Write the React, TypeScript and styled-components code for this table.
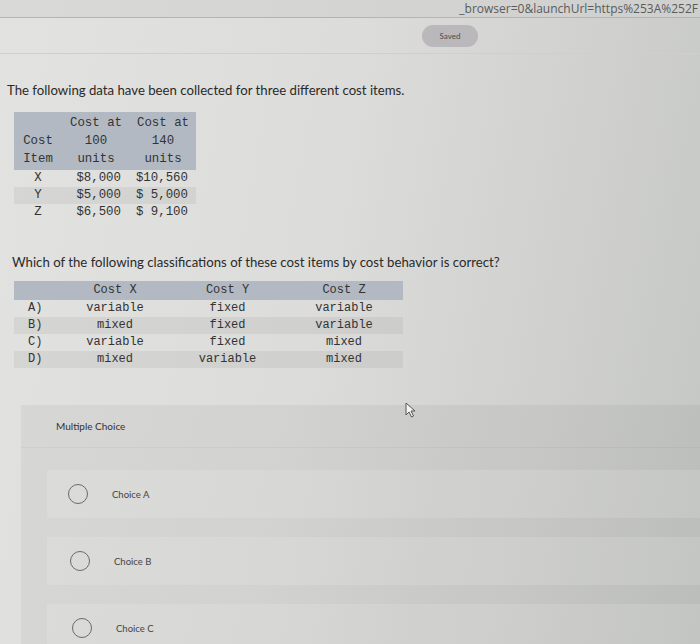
import React from "react";
import styled, { createGlobalStyle } from "styled-components";

const Global = createGlobalStyle`
  html, body { margin: 0; padding: 0; }
  body {
    width: 700px;
    height: 644px;
    overflow: hidden;
    background: linear-gradient(100deg, #e2e2e0 0%, #dcdcda 45%, #d0d1ce 75%, #c4c6c3 100%);
    font-family: Lato, "Open Sans", sans-serif;
    color: #2b2b2b;
  }
`;

const Page = styled.div`
  position: relative;
  width: 700px;
  height: 644px;
  overflow: hidden;
  display: flex;
  flex-direction: column;
`;

const UrlBar = styled.div`
  flex: none;
  height: 17px;
  border-bottom: 1px solid #b4b5b3;
  display: flex;
  justify-content: flex-end;
  align-items: center;
  overflow: hidden;
  background: linear-gradient(90deg, #d9d9d7, #cfd0ce);
`;

const UrlText = styled.span`
  font-family: "Open Sans", sans-serif;
  font-size: 12px;
  line-height: 15px;
  color: #5a5b5a;
  white-space: nowrap;
  margin-right: 2px;
`;

const StatusRow = styled.div`
  flex: none;
  height: 35px;
  display: flex;
  align-items: center;
  padding-left: 422px;
  border-bottom: 1px solid #cfd0ce;
`;

const SavedPill = styled.div`
  width: 56px;
  height: 22px;
  border-radius: 11px;
  background: #bab8bb;
  color: #4a4a4a;
  font-size: 8px;
  display: flex;
  align-items: center;
  justify-content: center;
`;

const Content = styled.div`
  flex: none;
  padding: 28px 0 0 7px;
  display: flex;
  flex-direction: column;
  align-items: flex-start;
`;

const Prompt = styled.p<{ $top?: number; $left?: number }>`
  margin: ${(p) => p.$top ?? 0}px 0 0 ${(p) => p.$left ?? 0}px;
  font-size: 13.2px;
  line-height: 16px;
  color: #2a2a2a;
  white-space: nowrap;
`;

const DataTable = styled.table<{ $top: number }>`
  margin: ${(p) => p.$top}px 0 0 7px;
  border-collapse: collapse;
  table-layout: fixed;
  font-family: "Liberation Mono", "DejaVu Sans Mono", monospace;
  font-size: 12.4px;
  color: #333;
`;

const HeadRow = styled.tr`
  background: #b2b9c2;
`;

const HeadCell = styled.th`
  font-weight: normal;
  text-align: center;
  vertical-align: bottom;
  line-height: 18px;
  padding: 2px 0 2px;
`;

const BodyRow = styled.tr<{ $shade?: boolean }>`
  background: ${(p) => (p.$shade ? "rgba(0,0,0,0.05)" : "transparent")};
`;

const Cell = styled.td<{ $align?: string; $pad?: number }>`
  text-align: ${(p) => p.$align ?? "center"};
  padding: 0 ${(p) => (p.$align === "right" ? p.$pad ?? 0 : 0)}px 0
    ${(p) => (p.$align === "left" ? p.$pad ?? 0 : 0)}px;
  line-height: 17px;
  white-space: pre;
`;

const ChoiceTable = styled(DataTable)`
  font-size: 12px;
`;

const ChoiceHead = styled.th`
  font-weight: normal;
  line-height: 19px;
  padding: 0;
`;

const Panel = styled.div`
  margin: 37px 0 0 21px;
  flex: 1;
  min-height: 0;
  overflow: hidden;
  background: rgba(0, 0, 0, 0.045);
  display: flex;
  flex-direction: column;
`;

const PanelHeader = styled.div`
  flex: none;
  height: 42px;
  padding-left: 35px;
  display: flex;
  align-items: center;
  font-size: 10px;
  color: #333;
  border-bottom: 1px solid rgba(0, 0, 0, 0.03);
`;

const ChoiceList = styled.div`
  flex: none;
  padding: 22px 0 0 26px;
  display: flex;
  flex-direction: column;
  gap: 19px;
`;

const ChoiceRow = styled.div<{ $shift: number }>`
  flex: none;
  height: 48px;
  background: rgba(255, 255, 255, 0.13);
  display: flex;
  align-items: center;
  padding-left: ${(p) => 21 + p.$shift}px;
`;

const Radio = styled.span`
  width: 18px;
  height: 18px;
  border-radius: 50%;
  border: 1.5px solid #6a6a6a;
  flex: none;
`;

const ChoiceLabel = styled.span`
  margin-left: 24px;
  font-size: 9.5px;
  color: #444;
`;

const Cursor = styled.svg`
  position: absolute;
  left: 405px;
  top: 402px;
`;

const costRows = [
  { item: "X", a: "$8,000", b: "$10,560", shade: false },
  { item: "Y", a: "$5,000", b: "$ 5,000", shade: true },
  { item: "Z", a: "$6,500", b: "$ 9,100", shade: false },
];

const options = [
  { l: "A)", x: "variable", y: "fixed", z: "variable" },
  { l: "B)", x: "mixed", y: "fixed", z: "variable" },
  { l: "C)", x: "variable", y: "fixed", z: "mixed" },
  { l: "D)", x: "mixed", y: "variable", z: "mixed" },
];

export default function App() {
  return (
    <>
      <Global />
      <Page>
        <UrlBar>
          <UrlText>_browser=0&amp;launchUrl=https%253A%252F</UrlText>
        </UrlBar>
        <StatusRow>
          <SavedPill>Saved</SavedPill>
        </StatusRow>
        <Content>
          <Prompt>The following data have been collected for three different cost items.</Prompt>
          <DataTable $top={14}>
            <colgroup>
              <col style={{ width: 48 }} />
              <col style={{ width: 68 }} />
              <col style={{ width: 66 }} />
            </colgroup>
            <thead>
              <HeadRow>
                <HeadCell>
                  Cost
                  <br />
                  Item
                </HeadCell>
                <HeadCell>
                  Cost at
                  <br />
                  100
                  <br />
                  units
                </HeadCell>
                <HeadCell>
                  Cost at
                  <br />
                  140
                  <br />
                  units
                </HeadCell>
              </HeadRow>
            </thead>
            <tbody>
              {costRows.map((r) => (
                <BodyRow key={r.item} $shade={r.shade}>
                  <Cell>{r.item}</Cell>
                  <Cell $align="right" $pad={9}>{r.a}</Cell>
                  <Cell $align="right" $pad={8}>{r.b}</Cell>
                </BodyRow>
              ))}
            </tbody>
          </DataTable>
          <Prompt $top={33} $left={5}>
            Which of the following classifications of these cost items by cost behavior is correct?
          </Prompt>
          <ChoiceTable $top={11}>
            <colgroup>
              <col style={{ width: 46 }} />
              <col style={{ width: 110 }} />
              <col style={{ width: 115 }} />
              <col style={{ width: 118 }} />
            </colgroup>
            <thead>
              <HeadRow>
                <ChoiceHead></ChoiceHead>
                <ChoiceHead>Cost X</ChoiceHead>
                <ChoiceHead>Cost Y</ChoiceHead>
                <ChoiceHead>Cost Z</ChoiceHead>
              </HeadRow>
            </thead>
            <tbody>
              {options.map((o, i) => (
                <BodyRow key={o.l} $shade={i % 2 === 1}>
                  <Cell $align="left" $pad={14}>{o.l}</Cell>
                  <Cell>{o.x}</Cell>
                  <Cell>{o.y}</Cell>
                  <Cell>{o.z}</Cell>
                </BodyRow>
              ))}
            </tbody>
          </ChoiceTable>
        </Content>
        <Panel>
          <PanelHeader>Multiple Choice</PanelHeader>
          <ChoiceList>
            {["Choice A", "Choice B", "Choice C"].map((c, i) => (
              <ChoiceRow key={c} $shift={i * 2}>
                <Radio />
                <ChoiceLabel>{c}</ChoiceLabel>
              </ChoiceRow>
            ))}
          </ChoiceList>
        </Panel>
        <Cursor width="12" height="16" viewBox="0 0 12 16">
          <path d="M1 1 L1 13 L4 10 L6.5 15 L8.5 14 L6 9 L10 9 Z" fill="#f4f4f4" stroke="#555" strokeWidth="1" strokeLinejoin="round" />
        </Cursor>
      </Page>
    </>
  );
}
